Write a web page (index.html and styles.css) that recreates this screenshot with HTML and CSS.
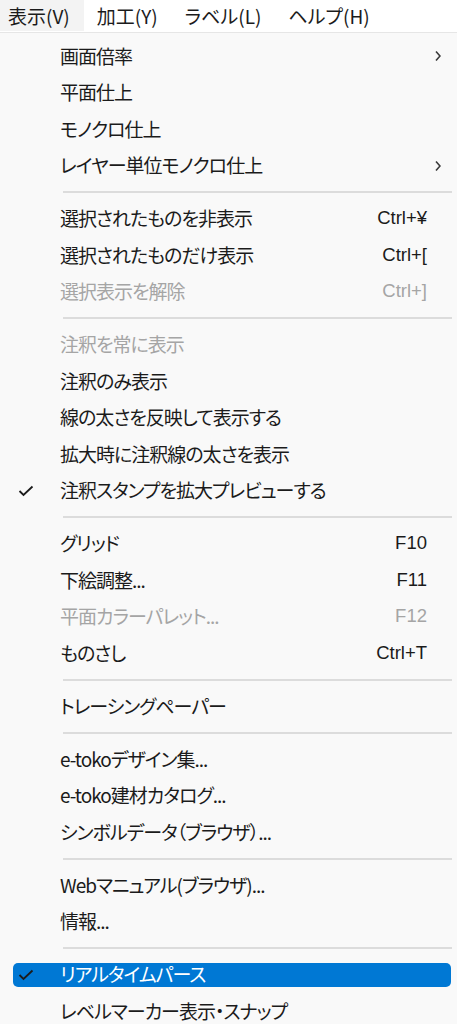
FILE: index.html
```html
<!DOCTYPE html>
<html lang="ja">
<head>
    <meta charset="UTF-8">
    <meta name="viewport" content="width=device-width, initial-scale=1.0">
    <title>表示メニュー</title>
    <link rel="stylesheet" href="styles.css">
</head>
<body>
    <div class="menubar">
        <span class="top open">表示(V)</span>
        <span class="top">加工(Y)</span>
        <span class="top">ラベル(L)</span>
        <span class="top">ヘルプ(H)</span>
    </div>
    <div class="menu">
        <div class="item"><div class="row"><span class="check"></span><span class="label">画面倍率</span><span class="key"></span><span class="sub"><svg width="6" height="12" viewBox="0 0 6 12"><path d="M1 1.5 L5 6 L1 10.5" fill="none" stroke="#3a3a3a" stroke-width="1.6"/></svg></span></div></div>
        <div class="item"><div class="row"><span class="check"></span><span class="label">平面仕上</span><span class="key"></span><span class="sub"></span></div></div>
        <div class="item"><div class="row"><span class="check"></span><span class="label">モノクロ仕上</span><span class="key"></span><span class="sub"></span></div></div>
        <div class="item"><div class="row"><span class="check"></span><span class="label">レイヤー単位モノクロ仕上</span><span class="key"></span><span class="sub"><svg width="6" height="12" viewBox="0 0 6 12"><path d="M1 1.5 L5 6 L1 10.5" fill="none" stroke="#3a3a3a" stroke-width="1.6"/></svg></span></div></div>
        <div class="sep"></div>
        <div class="item"><div class="row"><span class="check"></span><span class="label">選択されたものを非表示</span><span class="key">Ctrl+¥</span><span class="sub"></span></div></div>
        <div class="item"><div class="row"><span class="check"></span><span class="label">選択されたものだけ表示</span><span class="key">Ctrl+[</span><span class="sub"></span></div></div>
        <div class="item disabled"><div class="row"><span class="check"></span><span class="label">選択表示を解除</span><span class="key">Ctrl+]</span><span class="sub"></span></div></div>
        <div class="sep"></div>
        <div class="item disabled"><div class="row"><span class="check"></span><span class="label">注釈を常に表示</span><span class="key"></span><span class="sub"></span></div></div>
        <div class="item"><div class="row"><span class="check"></span><span class="label">注釈のみ表示</span><span class="key"></span><span class="sub"></span></div></div>
        <div class="item"><div class="row"><span class="check"></span><span class="label">線の太さを反映して表示する</span><span class="key"></span><span class="sub"></span></div></div>
        <div class="item"><div class="row"><span class="check"></span><span class="label">拡大時に注釈線の太さを表示</span><span class="key"></span><span class="sub"></span></div></div>
        <div class="item"><div class="row"><span class="check"><svg width="16" height="12" viewBox="0 0 16 12"><path d="M1.5 6 L5.5 10 L14.5 1.5" fill="none" stroke="#1b1b1b" stroke-width="1.8"/></svg></span><span class="label">注釈スタンプを拡大プレビューする</span><span class="key"></span><span class="sub"></span></div></div>
        <div class="sep"></div>
        <div class="item"><div class="row"><span class="check"></span><span class="label">グリッド</span><span class="key">F10</span><span class="sub"></span></div></div>
        <div class="item"><div class="row"><span class="check"></span><span class="label">下絵調整...</span><span class="key">F11</span><span class="sub"></span></div></div>
        <div class="item disabled"><div class="row"><span class="check"></span><span class="label">平面カラーパレット...</span><span class="key">F12</span><span class="sub"></span></div></div>
        <div class="item"><div class="row"><span class="check"></span><span class="label">ものさし</span><span class="key">Ctrl+T</span><span class="sub"></span></div></div>
        <div class="sep"></div>
        <div class="item"><div class="row"><span class="check"></span><span class="label">トレーシングペーパー</span><span class="key"></span><span class="sub"></span></div></div>
        <div class="sep"></div>
        <div class="item"><div class="row"><span class="check"></span><span class="label">e-tokoデザイン集...</span><span class="key"></span><span class="sub"></span></div></div>
        <div class="item"><div class="row"><span class="check"></span><span class="label">e-toko建材カタログ...</span><span class="key"></span><span class="sub"></span></div></div>
        <div class="item"><div class="row"><span class="check"></span><span class="label">シンボルデータ（ブラウザ）...</span><span class="key"></span><span class="sub"></span></div></div>
        <div class="sep"></div>
        <div class="item"><div class="row"><span class="check"></span><span class="label">Webマニュアル(ブラウザ)...</span><span class="key"></span><span class="sub"></span></div></div>
        <div class="item"><div class="row"><span class="check"></span><span class="label">情報...</span><span class="key"></span><span class="sub"></span></div></div>
        <div class="sep"></div>
        <div class="item selected"><div class="row"><span class="check"><svg width="16" height="12" viewBox="0 0 16 12"><path d="M1.5 6 L5.5 10 L14.5 1.5" fill="none" stroke="#1b1b1b" stroke-width="1.8"/></svg></span><span class="label">リアルタイムパース</span><span class="key"></span><span class="sub"></span></div></div>
        <div class="item"><div class="row"><span class="check"></span><span class="label">レベルマーカー表示・スナップ</span><span class="key"></span><span class="sub"></span></div></div>
    </div>
</body>
</html>
```

FILE: styles.css
```css
body {
    margin: 0;
    padding: 0;
    background-color: #f9f9f9;
    font-family: 'Noto Sans CJK JP', sans-serif;
    font-size: 19px;
    color: #1b1b1b;
    font-feature-settings: "palt";
    overflow: hidden;
}
.menubar {
    display: flex;
    height: 32px;
    background-color: #fff;
    border-bottom: 1px solid #e6e6e6;
}
.menubar .top {
    display: flex;
    align-items: center;
    padding: 0 14px 0 8px;
    margin-right: 5px;
    height: 31px;
}
.menubar .top.open {
    background-color: #f3f3f3;
}
.menu {
    padding-top: 5px;
}
.item {
    height: 36.5px;
    display: flex;
    align-items: center;
    padding: 0 6px 0 13px;
}
.item .row {
    flex: 1;
    height: 24px;
    display: flex;
    align-items: center;
    border-radius: 5px;
}
.item .check {
    width: 47px;
    display: flex;
    align-items: center;
    padding-left: 5px;
    box-sizing: border-box;
}
.item .check svg {
    display: block;
}
.item .label {
    flex: 1;
    white-space: nowrap;
    letter-spacing: -1px;
    padding-bottom: 2px;
}
.item .key {
    white-space: nowrap;
    font-family: 'Liberation Sans', 'Noto Sans CJK JP', sans-serif;
    font-size: 18.5px;
    padding-bottom: 1px;
}
.item .sub {
    width: 24px;
    display: flex;
    align-items: center;
    padding-left: 8px;
    box-sizing: border-box;
}
.item.disabled {
    color: #a5a5a5;
}
.item.selected .row {
    background-color: #0078d4;
    color: #fff;
}
.sep {
    height: 16.5px;
    display: flex;
    align-items: center;
    padding: 0 5px 0 63px;
}
.sep::after {
    content: "";
    flex: 1;
    height: 2px;
    background-color: #dcdcdc;
}
```
